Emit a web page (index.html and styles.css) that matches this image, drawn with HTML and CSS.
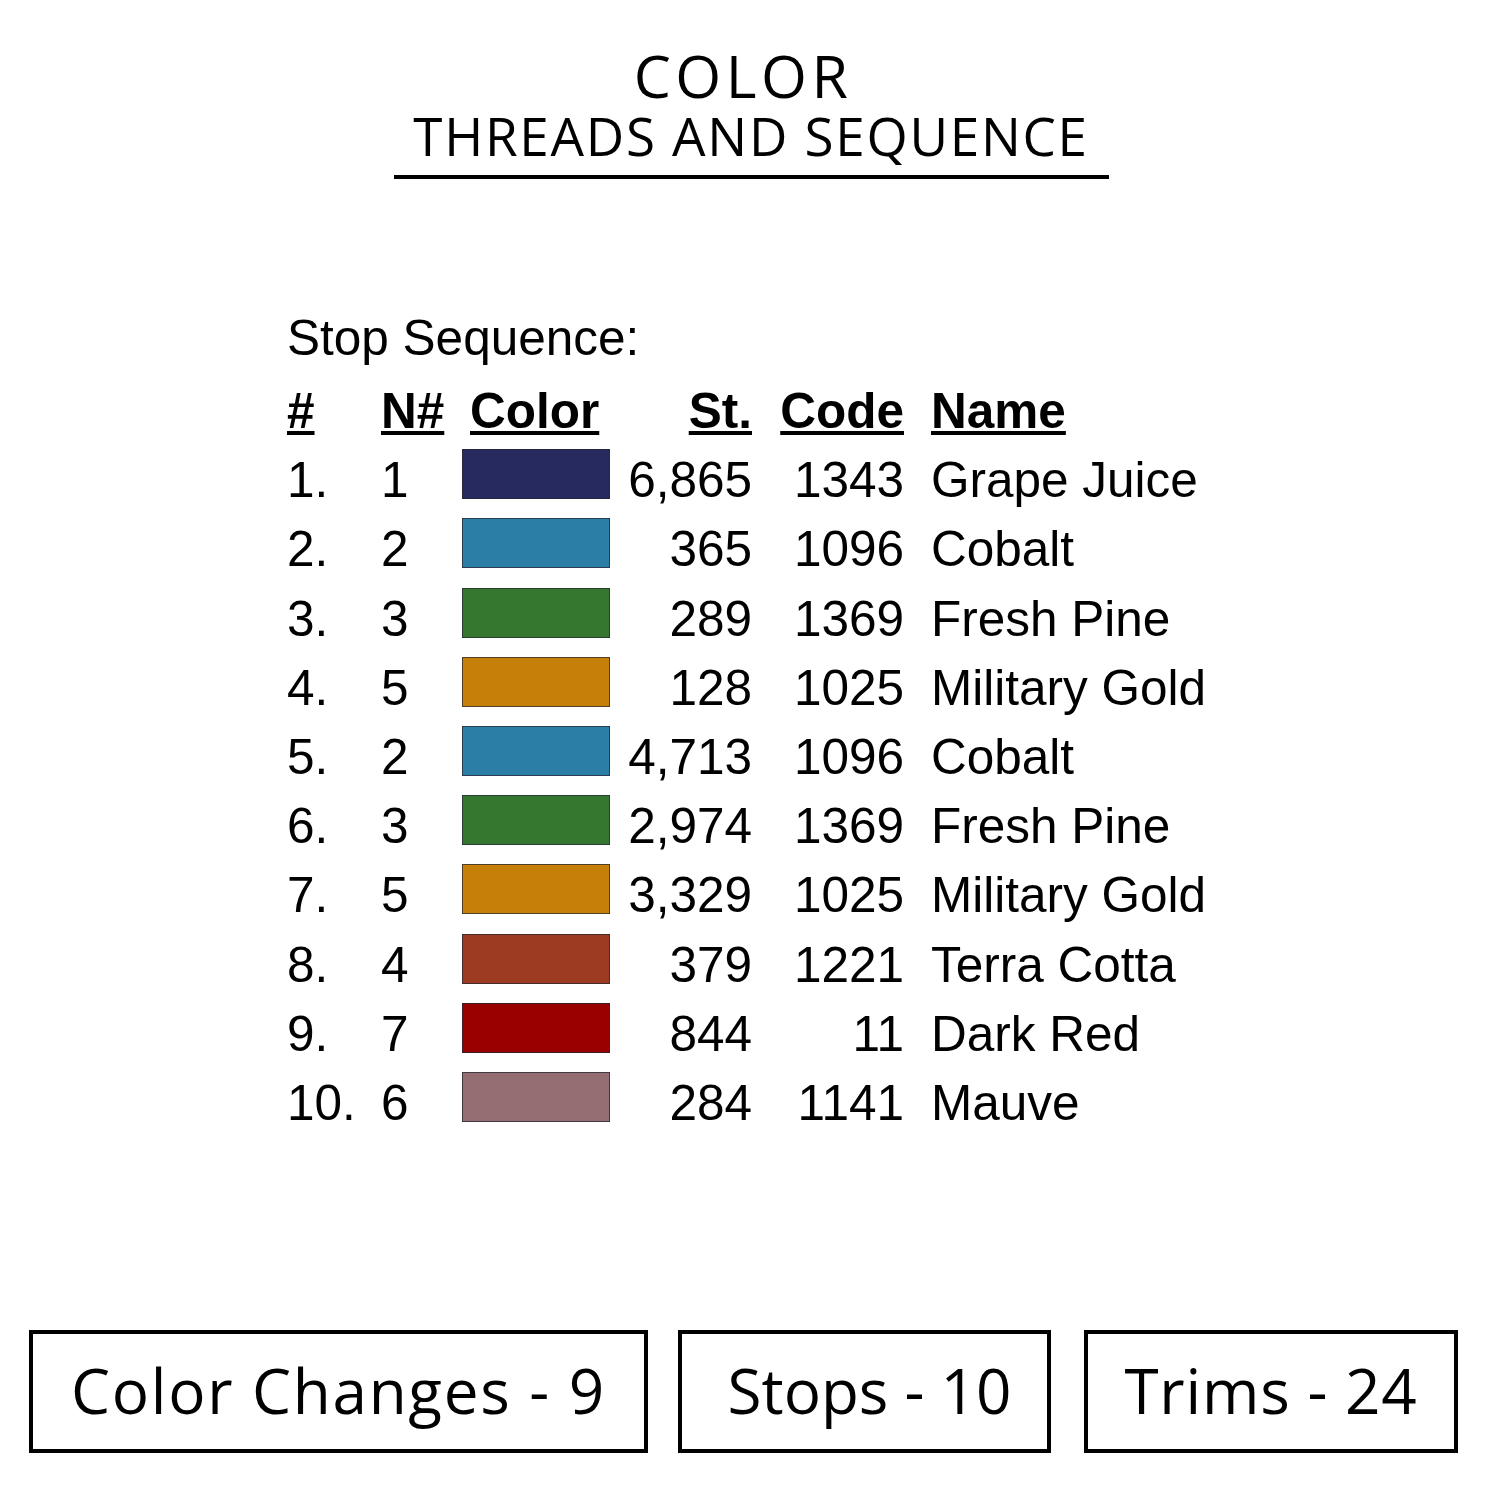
FILE: index.html
```html
<!DOCTYPE html>
<html>
<head>
<meta charset="utf-8">
<link rel="stylesheet" href="styles.css">
</head>
<body>
<div class="page">
  <header class="title">
    <div class="title-main">COLOR</div>
    <div class="title-sub">THREADS AND SEQUENCE</div>
  </header>

  <section class="seq">
    <div class="seq-label">Stop Sequence:</div>
    <div class="grid">
      <div class="h"><span>#</span></div>
      <div class="h"><span>N#</span></div>
      <div class="h hc"><span>Color</span></div>
      <div class="h r"><span>St.</span></div>
      <div class="h r"><span>Code</span></div>
      <div class="h nm"><span>Name</span></div>

      <div>1.</div><div>1</div><div class="sw c-grape"></div><div class="r">6,865</div><div class="r">1343</div><div class="nm">Grape Juice</div>
      <div>2.</div><div>2</div><div class="sw c-cobalt"></div><div class="r">365</div><div class="r">1096</div><div class="nm">Cobalt</div>
      <div>3.</div><div>3</div><div class="sw c-pine"></div><div class="r">289</div><div class="r">1369</div><div class="nm">Fresh Pine</div>
      <div>4.</div><div>5</div><div class="sw c-gold"></div><div class="r">128</div><div class="r">1025</div><div class="nm">Military Gold</div>
      <div>5.</div><div>2</div><div class="sw c-cobalt"></div><div class="r">4,713</div><div class="r">1096</div><div class="nm">Cobalt</div>
      <div>6.</div><div>3</div><div class="sw c-pine"></div><div class="r">2,974</div><div class="r">1369</div><div class="nm">Fresh Pine</div>
      <div>7.</div><div>5</div><div class="sw c-gold"></div><div class="r">3,329</div><div class="r">1025</div><div class="nm">Military Gold</div>
      <div>8.</div><div>4</div><div class="sw c-terra"></div><div class="r">379</div><div class="r">1221</div><div class="nm">Terra Cotta</div>
      <div>9.</div><div>7</div><div class="sw c-red"></div><div class="r">844</div><div class="r">11</div><div class="nm">Dark Red</div>
      <div>10.</div><div>6</div><div class="sw c-mauve"></div><div class="r">284</div><div class="r">1141</div><div class="nm">Mauve</div>
    </div>
  </section>

  <footer class="stats">
    <div class="stat stat-wide">Color Changes - 9</div>
    <div class="stat stat-mid">Stops - 10</div>
    <div class="stat stat-last">Trims - 24</div>
  </footer>
</div>
</body>
</html>
```

FILE: styles.css
```css
html, body {
  margin: 0;
  padding: 0;
  background: #ffffff;
}

.page {
  width: 1500px;
  height: 1500px;
  position: relative;
  color: #000;
}

.title {
  font-family: "Open Sans", "DejaVu Sans", sans-serif;
  display: flex;
  flex-direction: column;
  align-items: center;
  padding-top: 47px;
}

.title-main {
  font-size: 59px;
  line-height: 56px;
  letter-spacing: 4.5px;
  margin-left: -14px;
}

.title-sub {
  font-size: 53px;
  line-height: 60px;
  letter-spacing: 1.7px;
  width: 715px;
  text-align: center;
  border-bottom: 4px solid #000;
  padding-bottom: 9px;
  margin-top: 3px;
  margin-left: 2px;
}

.seq {
  font-family: "Liberation Sans", Arial, sans-serif;
  font-size: 49.5px;
  padding-left: 287px;
  margin-top: 124px;
}

.seq-label {
  line-height: 69px;
  height: 69px;
  margin-bottom: 4px;
}

.grid {
  display: grid;
  grid-template-columns: 94px 81px 148px 142px 152px auto;
  grid-auto-rows: 69.2px;
  line-height: 69.2px;
  white-space: nowrap;
}

.h {
  font-weight: bold;
}

.hc {
  padding-left: 8px;
}

.h span {
  text-decoration: underline;
  text-decoration-thickness: 4px;
  text-underline-offset: 3px;
}

.r {
  text-align: right;
}

.nm {
  padding-left: 27px;
}

.sw {
  align-self: start;
  margin-top: 4px;
  height: 50px;
  box-sizing: border-box;
  border: 1.5px solid rgba(40, 40, 50, 0.75);
}

.c-grape { background: #262a5e; }
.c-cobalt { background: #2b7fa7; }
.c-pine { background: #35772e; }
.c-gold { background: #c6800a; }
.c-terra { background: #9c3a22; }
.c-red { background: #9b0000; }
.c-mauve { background: #946e73; }

.stats {
  position: absolute;
  left: 29px;
  top: 1330px;
  display: flex;
  font-family: "Open Sans", "DejaVu Sans", sans-serif;
}

.stat {
  box-sizing: border-box;
  height: 123px;
  border: 4.5px solid #000;
  font-size: 62px;
  display: flex;
  align-items: center;
  justify-content: center;
  padding-bottom: 4px;
}

.stat-wide {
  width: 619px;
  letter-spacing: 1.7px;
}

.stat-mid {
  width: 373px;
  margin-left: 30px;
  padding-left: 10px;
}

.stat-last {
  width: 374px;
  margin-left: 33px;
  letter-spacing: 0.8px;
}
```
